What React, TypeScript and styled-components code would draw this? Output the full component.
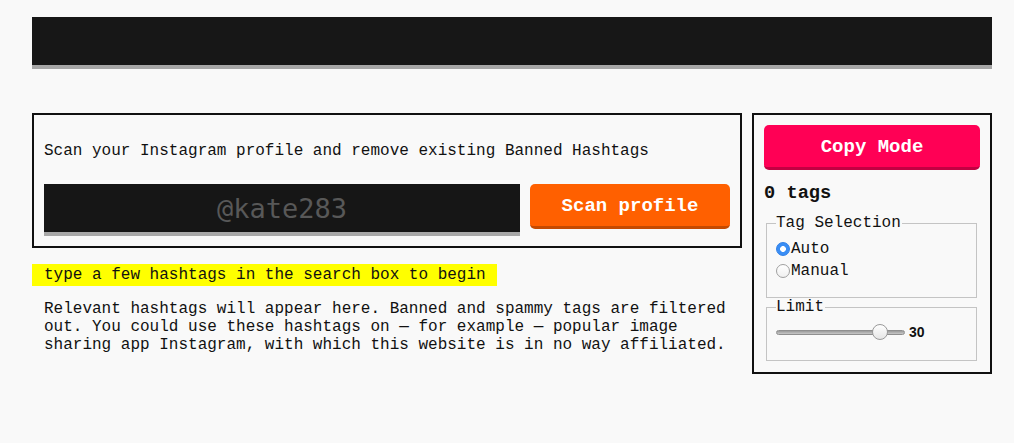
import React from "react";
import styled, { createGlobalStyle } from "styled-components";

const Global = createGlobalStyle`
  html, body { margin: 0; padding: 0; background: #f9f9f9; }
  body { font-family: "Liberation Mono", "Courier New", monospace; color: #111; }
  * { box-sizing: border-box; }
`;

const Page = styled.div`
  padding: 17px 0 0 32px;
  width: 992px;
`;

const Header = styled.div`
  height: 52px;
  background: #171717;
  border-bottom: 4px solid #a6a6a6;
`;

const Columns = styled.div`
  display: flex;
  align-items: flex-start;
  gap: 10px;
  margin-top: 44px;
`;

const Main = styled.div`
  width: 710px;
`;

const ScanPanel = styled.div`
  border: 2px solid #111;
  padding: 10px;
`;

const Intro = styled.p`
  margin: 17px 0 24px;
  font-size: 16px;
  line-height: 18px;
`;

const ScanRow = styled.div`
  display: flex;
  align-items: flex-start;
  gap: 10px;
`;

const HandleInput = styled.input`
  width: 476px;
  height: 52px;
  background: #161616;
  border: none;
  border-bottom: 4px solid #a8a8a8;
  color: #ddd;
  text-align: center;
  font-family: "DejaVu Sans Mono", monospace;
  font-size: 27px;
  outline: none;
  padding: 0;
  &::placeholder { color: #585858; }
`;

const ActionButton = styled.button<{ $bg: string; $edge: string; $width: string }>`
  width: ${(p) => p.$width};
  height: 45px;
  background: ${(p) => p.$bg};
  border: none;
  border-bottom: 3px solid ${(p) => p.$edge};
  border-radius: 5px;
  color: #fff;
  font-family: "Liberation Mono", "Courier New", monospace;
  font-weight: bold;
  font-size: 19px;
  padding: 1px 0 0;
  cursor: pointer;
`;

const Hint = styled.div`
  display: inline-block;
  margin-top: 16px;
  background: #ffff00;
  padding: 0 11px 0 12px;
  font-size: 16px;
  line-height: 22px;
`;

const Description = styled.p`
  margin: 14px 0 0;
  padding: 0 12px;
  font-size: 16px;
  line-height: 18px;
`;

const Sidebar = styled.div`
  width: 240px;
  border: 2px solid #111;
  padding: 10px 10px 11px;
`;

const TagCount = styled.h3`
  margin: 12px 0 10px;
  font-size: 18.7px;
  line-height: 22px;
  font-weight: bold;
`;

const Group = styled.fieldset<{ $pad: string }>`
  margin: 0 3px 0 2px;
  border: 1px solid #c4c4c4;
  padding: ${(p) => p.$pad};
  min-width: 0;
`;

const GroupTitle = styled.legend`
  padding: 0 1px 0 0;
  margin-left: -1px;
  font-size: 16px;
  line-height: 18px;
`;

const Option = styled.label`
  display: flex;
  align-items: center;
  height: 22px;
  font-size: 16px;
  margin-left: -1px;
`;

const Radio = styled.input`
  -webkit-appearance: none;
  appearance: none;
  width: 14px;
  height: 14px;
  margin: 0 1px 0 0;
  border-radius: 50%;
  border: 1px solid #a0a0a0;
  background: linear-gradient(#ffffff, #f0f0f0);
  &:checked {
    border-color: #2f7fe6;
    background: radial-gradient(circle, #ffffff 0 2.6px, #3a8ef5 3.2px);
  }
`;

const SliderRow = styled.div`
  display: flex;
  align-items: center;
  height: 32px;
  margin-left: -1px;
`;

const Slider = styled.input`
  -webkit-appearance: none;
  appearance: none;
  width: 129px;
  height: 16px;
  margin: 0 4px 0 0;
  background: transparent;
  &::-webkit-slider-runnable-track {
    height: 5px;
    border-radius: 3px;
    background: linear-gradient(#9a9a9a, #c8c8c8);
    border: 1px solid #8f8f8f;
  }
  &::-webkit-slider-thumb {
    -webkit-appearance: none;
    width: 16px;
    height: 16px;
    border-radius: 50%;
    background: linear-gradient(#ffffff, #e6e6e6);
    border: 1px solid #9a9a9a;
    margin-top: -6.5px;
  }
`;

const SliderValue = styled.span`
  font-family: "Liberation Sans", Arial, sans-serif;
  font-weight: bold;
  font-size: 14px;
`;

export default function App() {
  return (
    <>
      <Global />
      <Page>
        <Header />
        <Columns>
          <Main>
            <ScanPanel>
              <Intro>Scan your Instagram profile and remove existing Banned Hashtags</Intro>
              <ScanRow>
                <HandleInput placeholder="@kate283" />
                <ActionButton $bg="#ff6000" $edge="#c54a00" $width="200px">
                  Scan profile
                </ActionButton>
              </ScanRow>
            </ScanPanel>
            <Hint>type a few hashtags in the search box to begin</Hint>
            <Description>
              Relevant hashtags will appear here. Banned and spammy tags are filtered out. You could
              use these hashtags on — for example — popular image sharing app Instagram, with which
              this website is in no way affiliated.
            </Description>
          </Main>
          <Sidebar>
            <ActionButton $bg="#ff0055" $edge="#c20042" $width="216px">
              Copy Mode
            </ActionButton>
            <TagCount>0 tags</TagCount>
            <Group $pad="6px 8px 15px 10px">
              <GroupTitle>Tag Selection</GroupTitle>
              <Option>
                <Radio type="radio" name="sel" defaultChecked />
                Auto
              </Option>
              <Option>
                <Radio type="radio" name="sel" />
                Manual
              </Option>
            </Group>
            <Group $pad="0 8px 12px 10px">
              <GroupTitle>Limit</GroupTitle>
              <SliderRow>
                <Slider type="range" min={0} max={35} defaultValue={30} />
                <SliderValue>30</SliderValue>
              </SliderRow>
            </Group>
          </Sidebar>
        </Columns>
      </Page>
    </>
  );
}
